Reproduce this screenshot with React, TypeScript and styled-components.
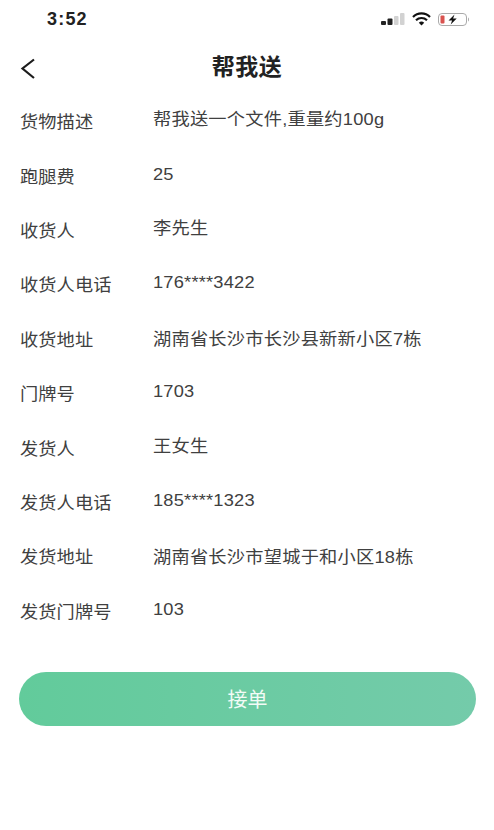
import React from 'react';
import styled, { createGlobalStyle } from 'styled-components';

const GlobalStyle = createGlobalStyle`
  html, body {
    margin: 0;
    padding: 0;
    background: #fff;
  }
`;

const Page = styled.div`
  width: 494px;
  height: 830px;
  overflow: hidden;
  background: #fff;
  font-family: "Liberation Sans", "Noto Sans CJK SC", sans-serif;
`;

const StatusBar = styled.div`
  box-sizing: border-box;
  height: 40px;
  padding: 0 24px 2px 47px;
  display: flex;
  align-items: center;
  justify-content: space-between;
`;

const Time = styled.span`
  font-size: 18px;
  font-weight: 700;
  letter-spacing: 1.2px;
  color: #222;
`;

const StatusIcons = styled.div`
  display: flex;
  align-items: center;
  gap: 7px;
`;

const Header = styled.header`
  height: 55px;
  padding: 0 20px;
  display: grid;
  grid-template-columns: 40px 1fr 40px;
  align-items: center;
`;

const Title = styled.h1`
  margin: 0;
  text-align: center;
  font-size: 23px;
  line-height: 1;
  font-weight: 700;
  letter-spacing: 0.5px;
  color: #222;
`;

const BackButton = styled.button`
  padding: 0;
  border: 0;
  background: none;
  display: flex;
`;

const List = styled.div`
  padding: 0 20px;
  display: flex;
  flex-direction: column;
`;

const Row = styled.div`
  height: 54.4px;
  display: grid;
  grid-template-columns: 132.5px 1fr;
  align-items: center;
`;

const Label = styled.span`
  margin-top: 2px;
  font-size: 17px;
  line-height: 24px;
  letter-spacing: 0.1px;
  color: #404040;
  white-space: nowrap;
  transform: scaleX(1.07);
  transform-origin: left center;
`;

/* the reference text is stretched sideways, so scale rather than space it */
const Value = styled.span<{ $low?: boolean }>`
  margin-top: ${(props) => (props.$low ? '-1px' : '-6px')};
  font-size: 16.5px;
  line-height: 24px;
  letter-spacing: 0.2px;
  color: #404040;
  white-space: nowrap;
  transform: scaleX(1.105);
  transform-origin: left center;
`;

const Footer = styled.div`
  margin-top: 33px;
  padding: 0 18px 0 19px;
`;

const AcceptButton = styled.button`
  width: 100%;
  height: 54px;
  border: 0;
  border-radius: 27px;
  background: linear-gradient(90deg, #62cb9b, #74cbaa);
  color: #f2fbf6;
  font-family: inherit;
  font-size: 20px;
`;

const rows: { label: string; value: string; low?: boolean }[] = [
  { label: '货物描述', value: '帮我送一个文件,重量约100g' },
  { label: '跑腿费', value: '25' },
  { label: '收货人', value: '李先生' },
  { label: '收货人电话', value: '176****3422' },
  { label: '收货地址', value: '湖南省长沙市长沙县新新小区7栋', low: true },
  { label: '门牌号', value: '1703' },
  { label: '发货人', value: '王女生' },
  { label: '发货人电话', value: '185****1323' },
  { label: '发货地址', value: '湖南省长沙市望城于和小区18栋', low: true },
  { label: '发货门牌号', value: '103' },
];

const SignalIcon = () => (
  <svg width="24" height="12" viewBox="0 0 24 12">
    <rect x="0" y="8" width="5" height="4" rx="1" fill="#222" />
    <rect x="6.5" y="5.5" width="5" height="6.5" rx="1" fill="#222" />
    <rect x="13" y="3" width="4.5" height="9" rx="1" fill="#d2d2d2" />
    <rect x="19" y="0" width="4.5" height="12" rx="1" fill="#d2d2d2" />
  </svg>
);

const WifiIcon = () => (
  <svg width="19" height="14" viewBox="0 0 19 14" fill="none">
    <path d="M1 5a12 12 0 0 1 17 0" stroke="#111" strokeWidth="2.2" />
    <path d="M4 8.2a8 8 0 0 1 11 0" stroke="#111" strokeWidth="2.2" />
    <path d="M6.8 10.8a4 4 0 0 1 5.4 0L9.5 13.6z" fill="#111" />
  </svg>
);

const BatteryIcon = () => (
  <svg width="32" height="13" viewBox="0 0 32 13" fill="none">
    <rect x="0.5" y="0.5" width="28" height="12" rx="3.5" stroke="#aaa" />
    <rect x="2.5" y="2.5" width="4" height="8" rx="1" fill="#d9534f" />
    <path d="M30 4.5c1.3.4 1.3 3.6 0 4z" fill="#aaa" />
    <path d="M16.5 1.5 10.5 7.4h3.6l-1.4 4.1 6-6h-3.6z" fill="#111" />
  </svg>
);

const BackIcon = () => (
  <svg width="16" height="24" viewBox="0 0 16 24" fill="none">
    <path d="M14 3.5 2.5 12.5l11.5 9.5" stroke="#1c1c1c" strokeWidth="2.2" />
  </svg>
);

export default function App() {
  return (
    <Page>
      <GlobalStyle />
      <StatusBar>
        <Time>3:52</Time>
        <StatusIcons>
          <SignalIcon />
          <WifiIcon />
          <BatteryIcon />
        </StatusIcons>
      </StatusBar>
      <Header>
        <BackButton>
          <BackIcon />
        </BackButton>
        <Title>帮我送</Title>
      </Header>
      <List>
        {rows.map((row) => (
          <Row key={row.label}>
            <Label>{row.label}</Label>
            <Value $low={row.low}>{row.value}</Value>
          </Row>
        ))}
      </List>
      <Footer>
        <AcceptButton>接单</AcceptButton>
      </Footer>
    </Page>
  );
}
